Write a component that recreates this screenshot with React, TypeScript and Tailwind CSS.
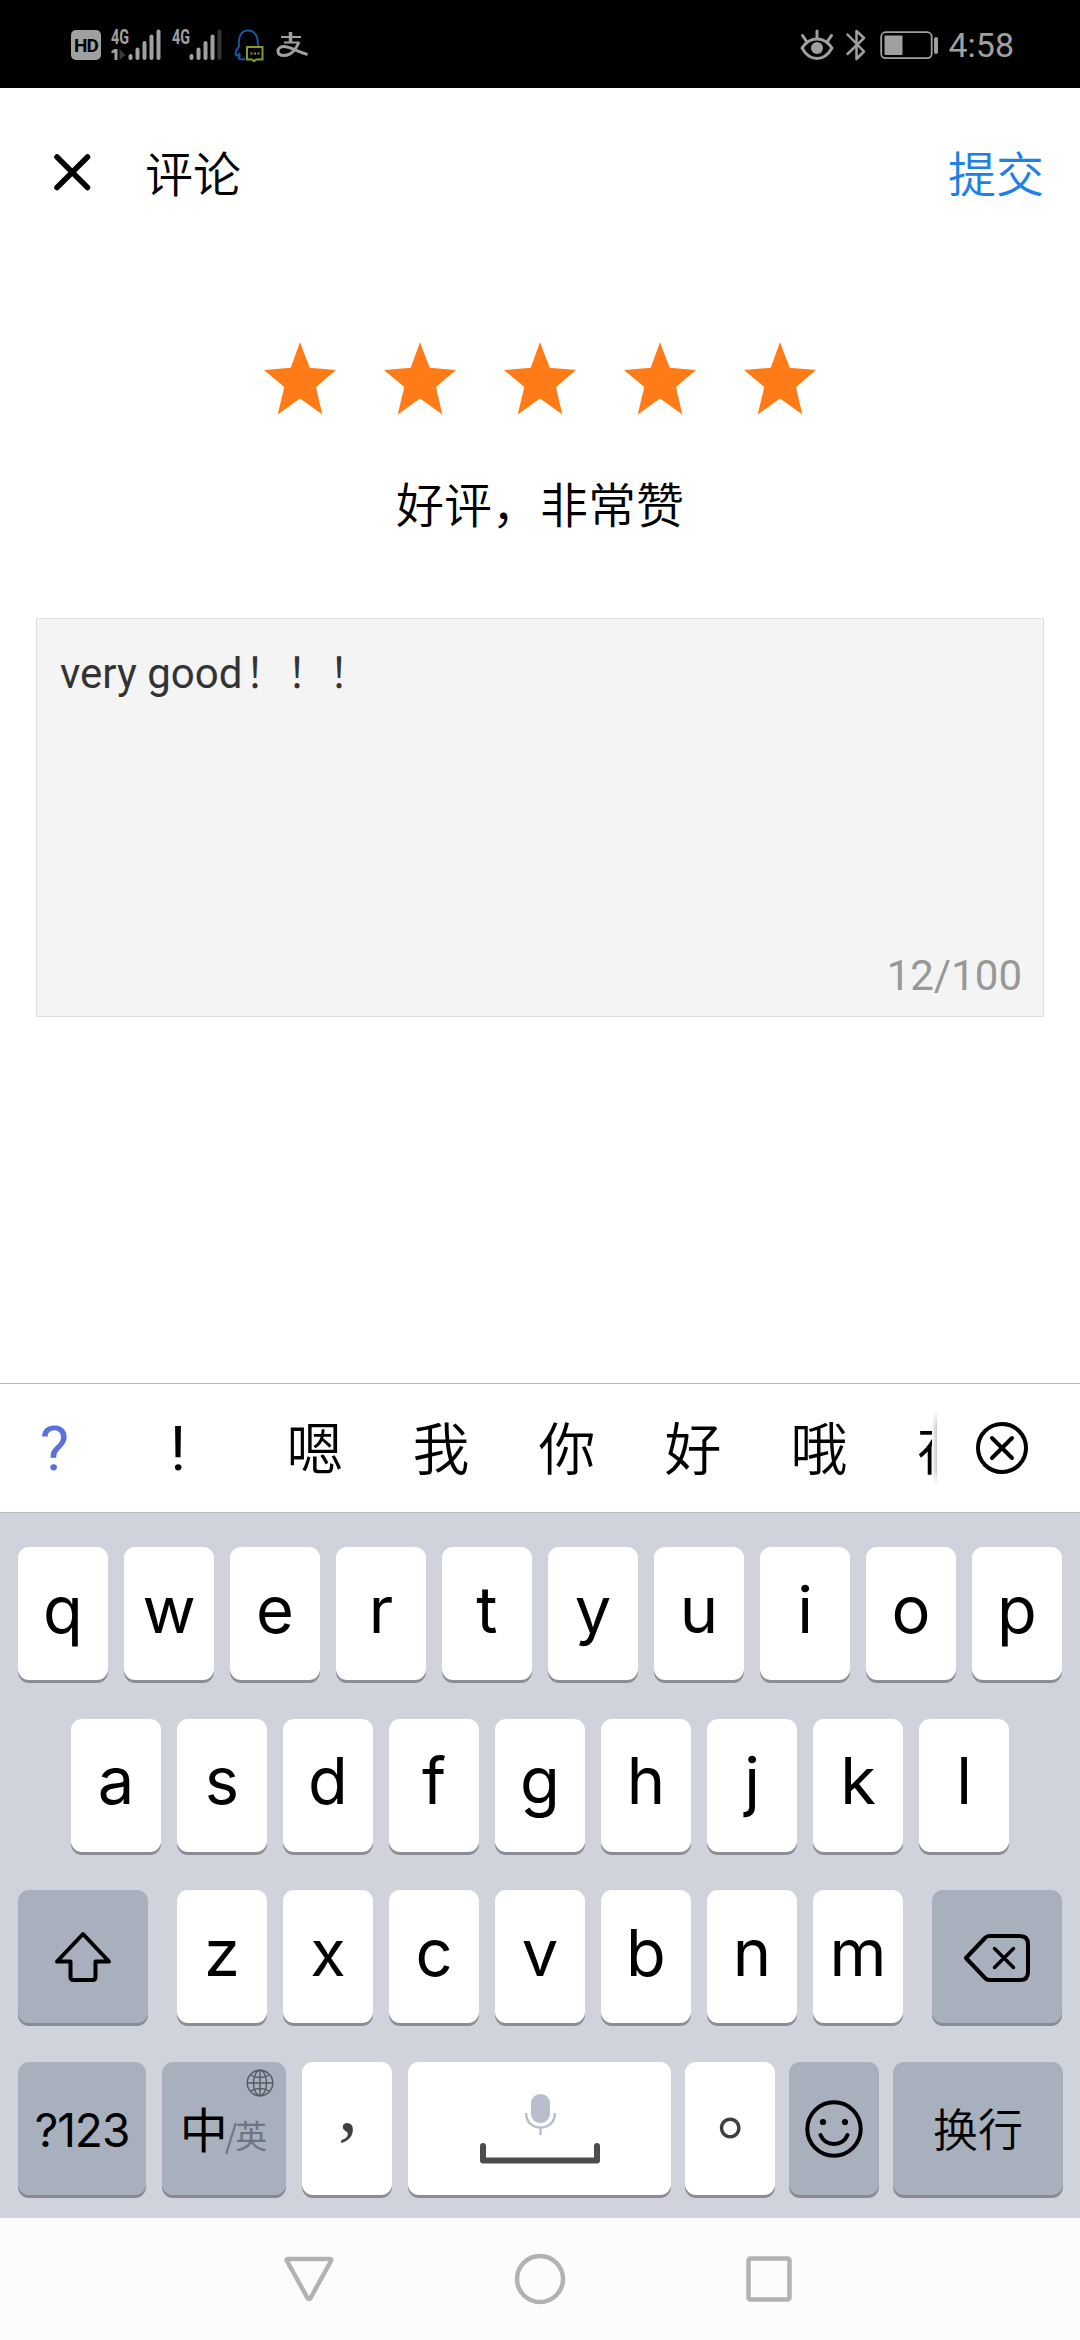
import React from 'react';

const CJK = "font-['Noto_Sans_CJK_SC',sans-serif]";

/* ---------- status bar icons ---------- */

const SignalIcon = ({ weak = false, second = false }: { weak?: boolean; second?: boolean }) => (
  <svg className="overflow-visible" width="52" height="40" viewBox="0 -3 52 40" fill="#a0a0a0">
    <text x="1" y="15.5" fontFamily="Roboto, sans-serif" fontSize="19.5" fontWeight="700" textLength="18" lengthAdjust="spacingAndGlyphs">
      4G
    </text>
    {second && (
      <>
        <path d="M4.5 21h3v11h-3v-7.500l-3 1v-2.500z" />
        <path d="M9.500 21l6 6-6 5z" fill="#3a3a3a" />
      </>
    )}
    <rect x="18.500" y="26" width="4" height="6" rx="2" />
    <rect x="25.500" y="19.500" width="4" height="12.500" rx="2" />
    <rect x="32.500" y="13" width="4" height="19" rx="2" />
    <rect x="39.500" y="6.500" width="4" height="25.500" rx="2" />
    <rect x="46.500" y="1.500" width="4" height="30.500" rx="2" fill={weak ? '#333333' : '#a0a0a0'} />
  </svg>
);

const StatusBar = () => (
  <div className="flex h-[88px] items-center justify-between bg-black pl-[71px] pr-[66px] pt-[2px]">
    <div className="flex items-center">
      <div className="flex h-[30px] w-[30px] items-center justify-center rounded-[5px] bg-[#a0a0a0] font-['Roboto',sans-serif] text-[19px] font-bold leading-none tracking-[-1px] text-black">
        HD
      </div>
      <div className="ml-[9px] flex gap-[9px]">
        <SignalIcon second />
        <SignalIcon weak />
      </div>
      <svg className="ml-[11px]" width="30" height="34" viewBox="0 0 30 34" fill="none">
        <path
          d="M11 31c-3 1-7 0-6-2 1-1 1-2 0-3-1 1-2 2-3 1.500-1-3 0-6 3-9C4 9 7 2.500 14 2.500S24 9 24 18"
          stroke="#1657a0"
          strokeWidth="2"
        />
        <path d="M13 19h15.500v12.500H22l-2 2-2-2h-5z" stroke="#87982c" strokeWidth="2" />
        <path d="M16.500 25.500h2m1.500 0h2m1.500 0h2" stroke="#87982c" strokeWidth="2" />
      </svg>
      <svg className="ml-[12px]" width="33" height="26" viewBox="0 0 33 26" fill="none" stroke="#a0a0a0">
        <path d="M5 5h20M8 10.500h15" strokeWidth="2.200" />
        <path d="M14.500 0v10.500" strokeWidth="3.500" />
        <path
          d="M23 10c-2 5-7 13.500-15 13.500-4 0-6-2-6-4.500 0-3 3-4.500 6-4.500 6 0 13 5 23.500 8"
          strokeWidth="3"
        />
      </svg>
    </div>

    <div className="flex items-center">
      <svg width="34" height="32" viewBox="0 0 34 32" fill="none" stroke="#a0a0a0" strokeWidth="3" strokeLinecap="round">
        <path d="M2 19c8-12 22-12 30 0-8 14-22 14-30 0z" strokeLinejoin="round" />
        <path d="M17 2v7M2.500 6.500L7 13M31.500 6.500L27 13" />
        <circle cx="17" cy="19" r="6" fill="#a0a0a0" stroke="none" />
      </svg>
      <svg className="ml-[11px]" width="22" height="34" viewBox="0 0 22 34" fill="none" stroke="#a0a0a0" strokeWidth="2.500" strokeLinejoin="round" strokeLinecap="round">
        <path d="M2.500 6.500l16.500 17L11.500 31V3L19 10 2.500 26" />
      </svg>
      <svg className="ml-[13px]" width="60" height="30" viewBox="0 0 60 30">
        <rect x="1.200" y="2.200" width="50.500" height="26" rx="4.500" fill="none" stroke="#a0a0a0" strokeWidth="1.800" />
        <rect x="4.500" y="5.500" width="18" height="19.500" rx="1" fill="#a0a0a0" />
        <rect x="54" y="7" width="4" height="17" rx="2" fill="#a0a0a0" />
      </svg>
      <span className="ml-[8px] font-['Roboto',sans-serif] text-[34px] leading-none text-[#a0a0a0]">4:58</span>
    </div>
  </div>
);

/* ---------- comment form ---------- */

const Header = () => (
  <header className={`flex h-[168px] items-center pl-[54px] pr-[36px] ${CJK}`}>
    <svg width="37" height="37" viewBox="0 0 37 37" stroke="#000" strokeWidth="5.500" strokeLinecap="round">
      <path d="M3 3l30.500 30.500M33.500 3L3 33.500" />
    </svg>
    <h1 className="mb-[3px] ml-[54px] text-[48px] font-[350] leading-[48px] text-black">评论</h1>
    <button className="mb-[3px] ml-auto text-[48px] font-[350] leading-[48px] text-[#2080e8]">提交</button>
  </header>
);

const Star = () => (
  <svg width="72" height="73" viewBox="0 0 72 73" fill="#ff7b17">
    <path d="M36 .3l9.700 25.400L72 28 52 45l6.300 27.600L36 56.600 13.700 72.600 20.300 45 0 28l26.700-2.300z" />
  </svg>
);

const CommentForm = () => (
  <main className="flex h-[1127px] flex-col px-[36px] pt-[86px]">
    <div className="flex justify-center gap-[48px]">
      {[1, 2, 3, 4, 5].map((n) => (
        <Star key={n} />
      ))}
    </div>
    <p className={`mt-[63px] text-center text-[48px] font-[350] leading-[48px] text-black ${CJK}`}>好评，非常赞</p>
    <div className="mt-[92px] flex h-[399px] flex-col justify-between border border-[#dedede] bg-[#f4f4f4] pb-[15px] pl-[23px] pr-[21px] pt-[30px] font-['Roboto','Noto_Sans_CJK_SC',sans-serif] text-[42px] leading-[50px]">
      <p className="font-normal text-[#333]">
        very good<span className="ml-[2px] font-[350]">！！！</span>
      </p>
      <p className="self-end text-[#989898]">12/100</p>
    </div>
  </main>
);

/* ---------- keyboard ---------- */

const candidates = ['嗯', '我', '你', '好', '哦', '在'];

const CandidateBar = () => (
  <div className="flex h-[130px] items-center border-y border-[#b8b8bb] bg-white">
    <div className="flex h-full w-[932px] items-center overflow-hidden text-black">
      <span className="w-[109px] shrink-0 text-center font-['Roboto',sans-serif] text-[62px] text-[#5b70d8]">?</span>
      <span className="w-[138px] shrink-0 text-center font-['Roboto',sans-serif] text-[62px]">!</span>
      <span className="w-[5px] shrink-0" />
      {candidates.map((c) => (
        <span key={c} className={`mb-[6px] w-[126px] shrink-0 text-center text-[57px] font-[350] leading-[60px] ${CJK}`}>
          {c}
        </span>
      ))}
    </div>
    {/* fades in towards the close button and out at both ends */}
    <div className="h-[78px] w-[5px] bg-gradient-to-r from-white to-[#c4c6cc] [mask-image:linear-gradient(transparent,black_25%,black_75%,transparent)]" />
    <svg className="ml-[38px]" width="54" height="54" viewBox="0 0 54 54" fill="none" stroke="#000" strokeWidth="4" strokeLinecap="round">
      <circle cx="27" cy="27" r="24" />
      <path d="M17 17l20 20M37 17L17 37" />
    </svg>
  </div>
);

type KeyProps = { className?: string; dark?: boolean; children: React.ReactNode };

const Key = ({ className = 'w-[90px]', dark = false, children }: KeyProps) => (
  <div
    className={`flex h-[133px] shrink-0 items-center justify-center rounded-[11px] text-black ${
      dark ? 'bg-[#a8afbd] shadow-[0_3px_0_#858a94]' : 'bg-white shadow-[0_3px_0_#8b8c95]'
    } ${className}`}
  >
    {children}
  </div>
);

const Letters = ({ chars }: { chars: string }) => (
  <>
    {chars.split('').map((c) => (
      <Key key={c}>
        <span className="pb-[9px] font-['Inter',sans-serif] text-[65px] leading-none">{c}</span>
      </Key>
    ))}
  </>
);

const Keyboard = () => (
  <div className="flex h-[705px] flex-col gap-[38.500px] bg-[#d0d3dc] px-[18px] pt-[34px]">
    <div className="flex gap-[16px]">
      <Letters chars="qwertyuiop" />
    </div>
    <div className="flex justify-center gap-[16px]">
      <Letters chars="asdfghjkl" />
    </div>
    <div className="flex justify-between">
      <Key dark className="w-[130px]">
        <svg width="58" height="52" viewBox="0 0 58 52" fill="none" stroke="#000" strokeWidth="4" strokeLinejoin="round">
          <path d="M29 3L3 30.500h13.500V46q0 3 3 3h19q3 0 3-3V30.500H55z" />
        </svg>
      </Key>
      <div className="flex gap-[16px]">
        <Letters chars="zxcvbnm" />
      </div>
      <Key dark className="w-[130px]">
        <svg className="mt-[3px]" width="68" height="50" viewBox="0 0 68 50" fill="none" stroke="#000" strokeLinecap="round" strokeLinejoin="round">
          <path d="M3 25L22 5q2-2 4-2h31q8 0 8 8v28q0 8-8 8H26q-2 0-4-2z" strokeWidth="4" />
          <path d="M31.500 15.500l19 19M50.500 15.500l-19 19" strokeWidth="3.500" />
        </svg>
      </Key>
    </div>
    <div className="flex">
      <Key dark className="w-[128px]">
        <span className="pt-[3px] font-['Inter',sans-serif] text-[46px] leading-none tracking-[-1px]">?123</span>
      </Key>
      <Key dark className="relative ml-[16px] w-[124px]">
        <span className={`mb-[2px] text-[48px] leading-[48px] ${CJK}`}>中</span>
        <span className={`-ml-[3px] mr-[3px] pt-[12px] text-[32px] leading-[32px] tracking-[-2px] text-[#6f747e] ${CJK}`}>/英</span>
        <svg className="absolute right-[12px] top-[7px]" width="28" height="28" viewBox="0 0 28 28" fill="none" stroke="#555a64" strokeWidth="1.400">
          <circle cx="14" cy="14" r="12.800" />
          <ellipse cx="14" cy="14" rx="6.500" ry="12.800" />
          <path d="M14 1v26M1 14h26M4.500 6q9.500 5 19 0M4.500 22q9.500-5 19 0" />
        </svg>
      </Key>
      <Key className="ml-[16px] w-[90px]">
        <span className="pb-[46px] pl-[2px] font-['Liberation_Serif',serif] text-[78px] leading-none text-[#404040]">,</span>
      </Key>
      <Key className="ml-[16px] w-[263px]">
        <svg width="120" height="72" viewBox="0 0 120 72" fill="none">
          <rect x="51" y="2" width="19" height="29" rx="9" fill="#b8becb" />
          <path d="M46.200 21v1c0 18 28.600 18 28.600 0v-1M60.500 36v7" stroke="#b8becb" strokeWidth="2.500" />
          <path d="M3 54v14.500h114V54" stroke="#4d4d4d" strokeWidth="6" strokeLinecap="round" strokeLinejoin="round" />
        </svg>
      </Key>
      <Key className="ml-[14px] w-[90px]">
        <span className={`pb-[46px] pl-[42px] text-[68px] leading-none text-[#404040] ${CJK}`}>。</span>
      </Key>
      <Key dark className="ml-[14px] w-[90px]">
        <svg width="58" height="60" viewBox="0 0 58 60" fill="none" stroke="#000" strokeWidth="4">
          <circle cx="29" cy="31" r="26.700" />
          <path d="M15.500 37c5 12 22 12 27 0" strokeLinecap="round" />
          <circle cx="18" cy="24" r="3.100" fill="#000" stroke="none" />
          <circle cx="40" cy="24" r="3.100" fill="#000" stroke="none" />
        </svg>
      </Key>
      <Key dark className="ml-[14px] w-[170px]">
        <span className={`text-[45px] font-[350] leading-[46px] ${CJK}`}>换行</span>
      </Key>
    </div>
  </div>
);

/* ---------- system navigation ---------- */

const NavBar = () => (
  <nav className="flex h-[122px] items-center bg-[#fcfcfc] pl-[283px]">
    <svg width="52" height="48" viewBox="0 0 52 48" fill="none" stroke="#b2b2b2" strokeWidth="4.500" strokeLinejoin="round">
      <path d="M5 4h42q2 0 1 2L27.500 43q-1.500 2-3 0L4 6q-1-2 1-2z" />
    </svg>
    <svg className="ml-[179px]" width="52" height="52" viewBox="0 0 52 52" fill="none" stroke="#b2b2b2" strokeWidth="4.500">
      <circle cx="26" cy="26" r="23" />
    </svg>
    <svg className="ml-[180px]" width="46" height="46" viewBox="0 0 46 46" fill="none" stroke="#b2b2b2" strokeWidth="4.500">
      <rect x="2.500" y="2.500" width="41" height="41" rx="2" />
    </svg>
  </nav>
);

export default function App() {
  return (
    <div className="h-[2340px] w-[1080px] overflow-hidden bg-white">
      <StatusBar />
      <Header />
      <CommentForm />
      <CandidateBar />
      <Keyboard />
      <NavBar />
    </div>
  );
}
